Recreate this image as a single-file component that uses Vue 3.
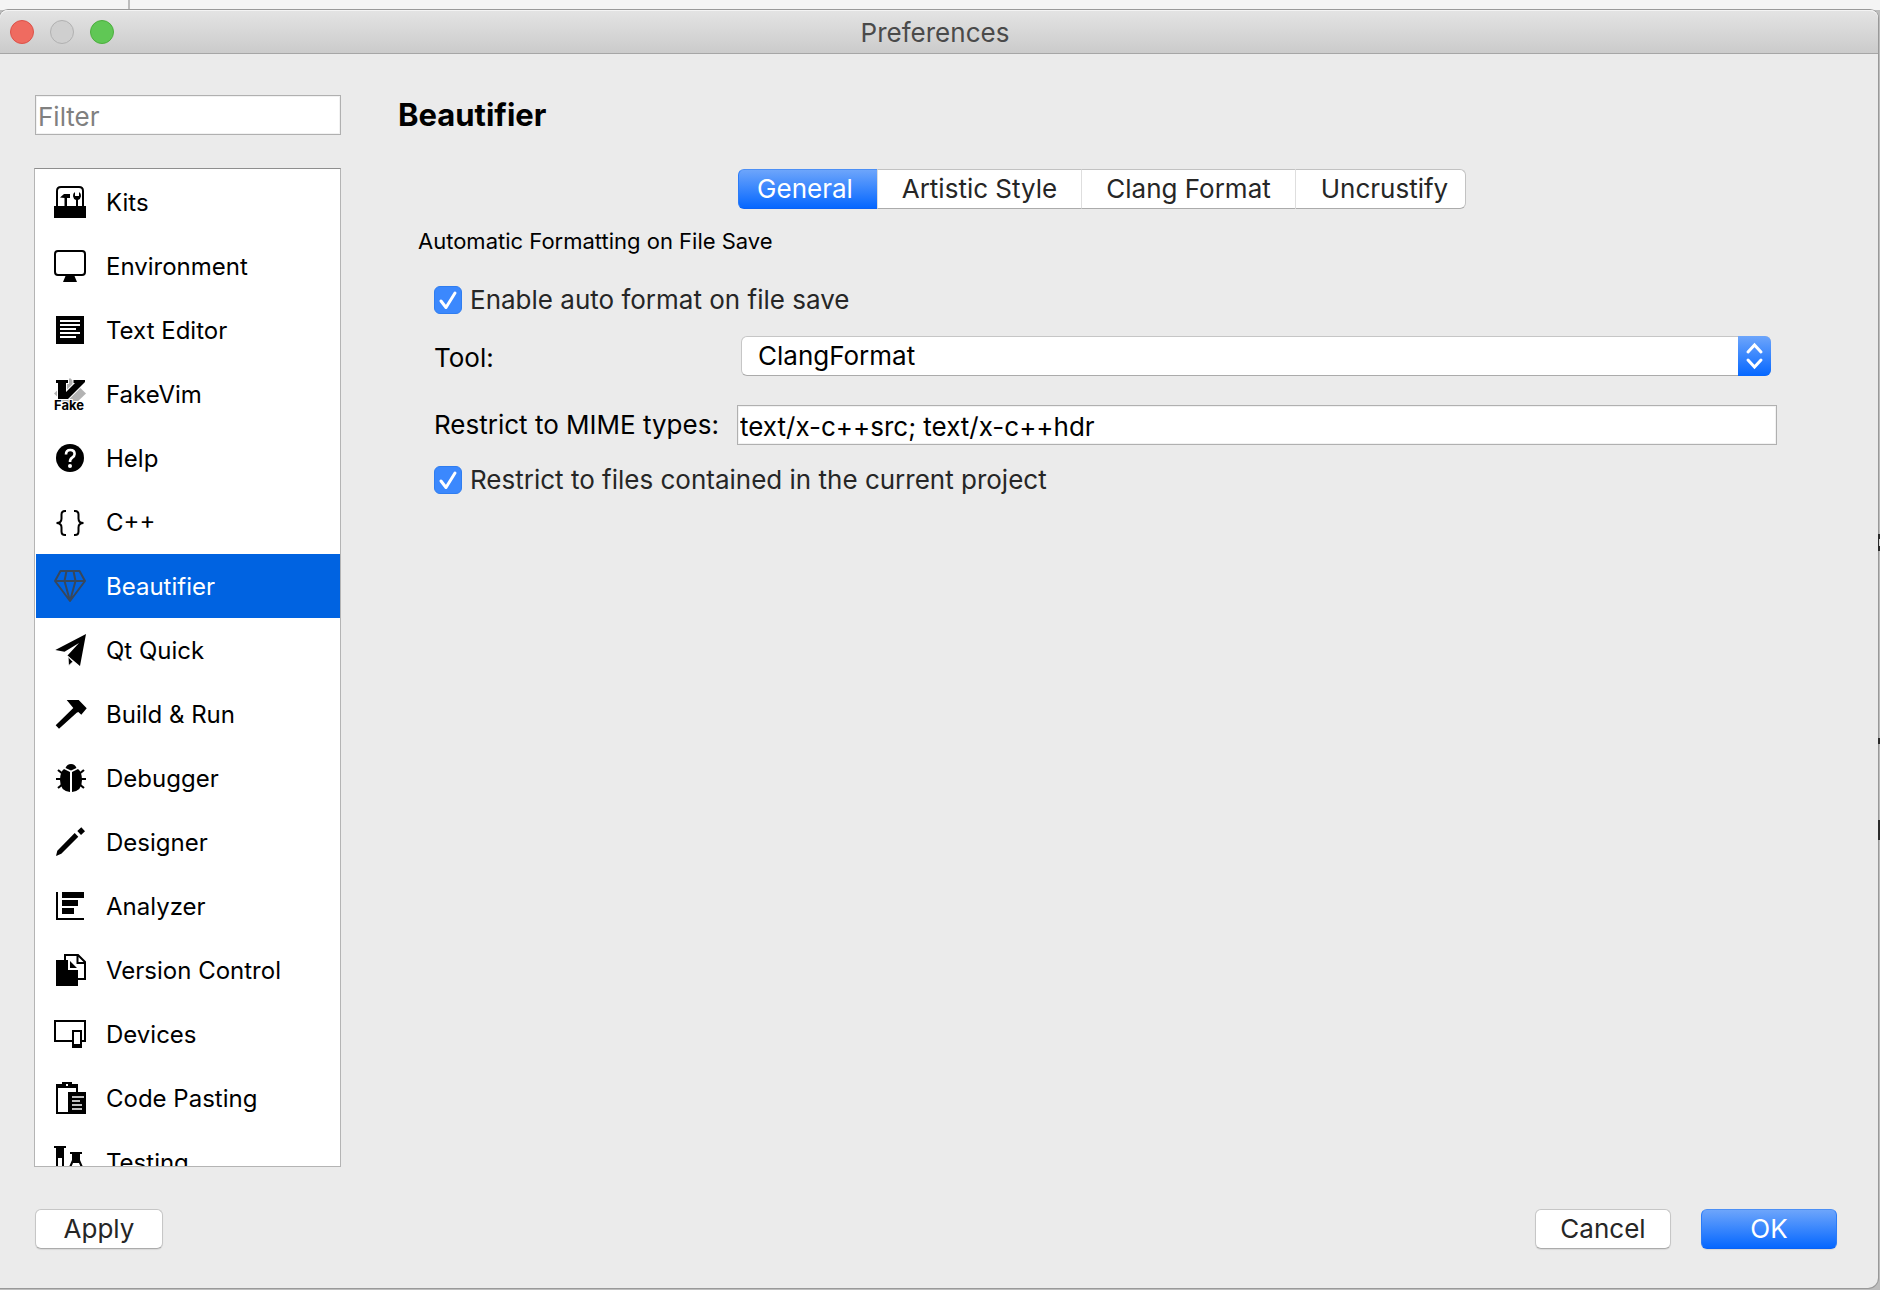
<script setup>
import { ref } from 'vue'

const categories = [
  { id: 'kits', label: 'Kits' },
  { id: 'environment', label: 'Environment' },
  { id: 'editor', label: 'Text Editor' },
  { id: 'fakevim', label: 'FakeVim' },
  { id: 'help', label: 'Help' },
  { id: 'cpp', label: 'C++' },
  { id: 'beautifier', label: 'Beautifier' },
  { id: 'quick', label: 'Qt Quick' },
  { id: 'build', label: 'Build & Run' },
  { id: 'debugger', label: 'Debugger' },
  { id: 'designer', label: 'Designer' },
  { id: 'analyzer', label: 'Analyzer' },
  { id: 'vcs', label: 'Version Control' },
  { id: 'devices', label: 'Devices' },
  { id: 'pasting', label: 'Code Pasting' },
  { id: 'testing', label: 'Testing' },
]
const tabs = ['General', 'Artistic Style', 'Clang Format', 'Uncrustify']

const current = ref('beautifier')
const currentTab = ref('General')
const filter = ref('')
const autoFormat = ref(true)
const tool = ref('ClangFormat')
const mimeTypes = ref('text/x-c++src; text/x-c++hdr')
const projectOnly = ref(true)
</script>

<template>
  <div class="desktop">
    <div class="behind-top"></div>
    <div class="behind-edge" aria-hidden="true">
      <i class="mark ring"></i>
      <i class="mark dot"></i>
      <i class="mark bar"></i>
    </div>

    <div class="window">
      <header class="titlebar">
        <div class="lights">
          <button class="light close" aria-label="Close"></button>
          <button class="light minimize" aria-label="Minimize" disabled></button>
          <button class="light zoom" aria-label="Zoom"></button>
        </div>
        <span class="title">Preferences</span>
      </header>

      <div class="body">
        <aside class="sidebar">
          <input v-model="filter" class="field filter" type="text" placeholder="Filter" aria-label="Filter" />
          <ul class="list">
            <li v-for="c in categories" :key="c.id">
              <button class="row" :class="{ selected: c.id === current }" @click="current = c.id">
                <svg class="icon" viewBox="0 0 32 32" aria-hidden="true">
                  <g v-if="c.id === 'kits'">
                    <path d="M3 20V5q0-4 4-4h18q4 0 4 4v15" fill="none" stroke="currentColor" stroke-width="2" />
                    <path d="M0 20h32v12H0zM6 11.500l4-3.500h6v4h-3v8h-2.500v-8z" />
                    <path d="M21 6v4h4V6a4.500 4.500 0 0 1-1 8v6h-2v-6a4.500 4.500 0 0 1-1-8z" />
                  </g>
                  <g v-else-if="c.id === 'environment'">
                    <rect x="1" y="1" width="30" height="24" rx="3" fill="none" stroke="currentColor" stroke-width="2" />
                    <path d="M11.500 26h9l2.500 6H9z" />
                  </g>
                  <g v-else-if="c.id === 'editor'">
                    <path d="M2 2h28v28H2z" />
                    <path d="M6 7h20M6 11h20M6 15h16M6 19h20M6 23h16" stroke="#fff" stroke-width="2" />
                  </g>
                  <g v-else-if="c.id === 'fakevim'">
                    <path d="M16 0l16 15.500L20 27H12L0 15.500z" fill="#b3b3b3" />
                    <path d="M2 2h12v3h-2v9l9-9h-1.500V2H31v2L14 21H4V5H2z" stroke="#fff" stroke-width="2" paint-order="stroke" />
                    <text class="fake" x="0" y="32" stroke="#fff" stroke-width="2" paint-order="stroke">Fake</text>
                  </g>
                  <g v-else-if="c.id === 'help'">
                    <circle cx="16" cy="16" r="14" />
                    <path d="M12 12.500q0-4.500 4.300-4.500t4.300 4q0 2-2.400 3.600T16 20" fill="none" stroke="#fff" stroke-width="2.600" />
                    <circle cx="16" cy="24" r="2" fill="#fff" />
                  </g>
                  <g v-else-if="c.id === 'cpp'" fill="none" stroke="currentColor" stroke-width="2">
                    <path d="M12 5h-1q-3.500 0-3.500 3.500v4Q7.500 17 2.500 17q5 0 5 4.500v4q0 3.500 3.500 3.500h1" />
                    <path d="M20 5h1q3.500 0 3.500 3.500v4q0 4.500 5 4.500-5 0-5 4.500v4q0 3.500-3.500 3.500h-1" />
                  </g>
                  <g v-else-if="c.id === 'beautifier'" fill="none" stroke="#37475b" stroke-width="2" stroke-linejoin="round">
                    <path d="M6.500 1h19L31 11 16 31 1 11zM1 11h30M12.500 1l-2 10L16 31l5.500-20-2-10" />
                  </g>
                  <g v-else-if="c.id === 'quick'">
                    <path d="M32 0L1.300 16l9.200 1.800L25 9 13.500 21.500 26 32z" />
                    <path d="M14 22.500l5 5.200-4.600 4.300z" stroke="#fff" stroke-width="1" />
                  </g>
                  <g v-else-if="c.id === 'build'">
                    <path d="M12.700 2h12l8 8.300-5.400 6.400-3-2.700-1.600.8L5 30.700 1.700 27.300 19.300 10z" />
                  </g>
                  <g v-else-if="c.id === 'debugger'">
                    <path d="M11.500 6q1.500-4 5.500-4t5.500 4L17 8.500zM16 10v20q-10-1-10-12 0-8 4-11zM18 10v20q10-1 10-12 0-8-4-11z" />
                    <path d="M2 17h6M26 17h6M4 8l5 4M30 8l-5 4M4 26l5-4M30 26l-5-4" stroke="currentColor" stroke-width="2.200" />
                  </g>
                  <g v-else-if="c.id === 'designer'">
                    <path d="M2 30l1.300-5.300L20.700 7l3.600 3.700-17 17zM27.300 1.300l3.700 4L27 9l-3.700-4z" />
                  </g>
                  <g v-else-if="c.id === 'analyzer'">
                    <path d="M2 2h2v26h26v2H2zM8 2h22v6H8zM8 10h16v6H8zM8 18h12v6H8z" />
                  </g>
                  <g v-else-if="c.id === 'vcs'">
                    <path d="M11 7V1h13l7 7v17h-7M23.500 1v8H31" fill="none" stroke="currentColor" stroke-width="2" />
                    <path d="M2 6h12v10h10v16H2zM16 7l7 7h-7z" />
                  </g>
                  <g v-else-if="c.id === 'devices'">
                    <path d="M18 24H0V2h32v22h-4v-2h2V4H2v18h16z" />
                    <path d="M18 12h10v18H18zM20 14v12h6V14z" fill-rule="evenodd" />
                  </g>
                  <g v-else-if="c.id === 'pasting'">
                    <path d="M2 2h6V0h10v2h6v8h-2V6H4v24h10v2H2zM12 2v2h2V2zM14 10h18v22H14z" fill-rule="evenodd" />
                    <path d="M18 15h12M18 19h8M18 23h10M18 27h10" stroke="#fff" stroke-width="1.600" />
                  </g>
                  <g v-else>
                    <path d="M0 0h12v2h-2v26q0 4-4 4t-4-4V2H0zM4 12v16q2 3 4 0V12z" fill-rule="evenodd" />
                    <path d="M16 6h12v2h-2v6l6 14v4H12v-4l6-14V8h-2zM19 17l-3 7h12l-3-7z" fill-rule="evenodd" />
                  </g>
                </svg>
                <span class="name">{{ c.label }}</span>
              </button>
            </li>
          </ul>
        </aside>

        <main class="pane">
          <h1>Beautifier</h1>
          <div class="tabs" role="tablist">
            <button
              v-for="t in tabs"
              :key="t"
              class="tab"
              role="tab"
              :aria-selected="t === currentTab"
              :class="{ active: t === currentTab }"
              @click="currentTab = t"
            >{{ t }}</button>
          </div>
          <h2>Automatic Formatting on File Save</h2>
          <div class="form">
            <label class="check">
              <input v-model="autoFormat" type="checkbox" />
              <svg class="tick" viewBox="0 0 28 28" aria-hidden="true"><path d="M7 15l5 6.500L21 7" /></svg>
              <span>Enable auto format on file save</span>
            </label>
            <div class="line tool-line">
              <label for="tool">Tool:</label>
              <div class="select">
                <select id="tool" v-model="tool">
                  <option>ClangFormat</option>
                  <option>ArtisticStyle</option>
                  <option>Uncrustify</option>
                </select>
                <svg class="stepper" viewBox="0 0 33 40" aria-hidden="true"><path d="M10 16l6.500-7 6.500 7M10 24l6.500 7 6.500-7" /></svg>
              </div>
            </div>
            <div class="line mime-line">
              <label for="mime">Restrict to MIME types:</label>
              <input id="mime" v-model="mimeTypes" class="field" type="text" />
            </div>
            <label class="check">
              <input v-model="projectOnly" type="checkbox" />
              <svg class="tick" viewBox="0 0 28 28" aria-hidden="true"><path d="M7 15l5 6.500L21 7" /></svg>
              <span>Restrict to files contained in the current project</span>
            </label>
          </div>
        </main>
      </div>

      <footer class="footer">
        <button class="btn apply">Apply</button>
        <button class="btn">Cancel</button>
        <button class="btn primary">OK</button>
      </footer>
    </div>
  </div>
</template>

<style>
html,
body {
  margin: 0;
  background: #c4c4c4;
}
</style>

<style scoped>
* {
  box-sizing: border-box;
}
.desktop {
  position: relative;
  display: flex;
  flex-direction: column;
  height: 100vh;
  overflow: hidden;
  background: #bdbdbd;
  font-family: Inter, "Liberation Sans", sans-serif;
  font-size: 26px;
  line-height: 32px;
  color: #000;
}
button,
input,
select {
  font: inherit;
  color: inherit;
  margin: 0;
}
.behind-top {
  flex: none;
  height: 10px;
  background: linear-gradient(90deg, transparent 128px, #bcbcbc 128px 130px, transparent 130px), #f4f4f4;
}
.behind-edge {
  position: absolute;
  top: 9px;
  right: 0;
  bottom: 0;
  width: 2px;
}
.mark {
  position: absolute;
  left: 0;
  width: 2px;
  background: #2b2b2b;
}
.ring {
  top: 525px;
  height: 17px;
  border: solid #2b2b2b;
  border-width: 5px 0 5px 1px;
  background: #d8d8d8;
}
.dot {
  top: 729px;
  height: 6px;
}
.bar {
  top: 811px;
  height: 20px;
}
.window {
  flex: 1;
  min-height: 0;
  margin: 0 2px 2px 0;
  display: flex;
  flex-direction: column;
  background: #ebebeb;
  border-radius: 8px 8px 10px 0;
  box-shadow: 0 0 0 1px #999;
}
.titlebar {
  flex: none;
  display: grid;
  grid-template-columns: 1fr auto 1fr;
  align-items: center;
  height: 44px;
  padding: 0 18px 0 10px;
  background: linear-gradient(#e4e4e4, #cbcbcb);
  border-bottom: 1px solid #a6a6a6;
  border-radius: 8px 8px 0 0;
  box-shadow: inset 0 1px #f4f4f4;
}
.lights {
  display: flex;
  gap: 16px;
}
.light {
  width: 24px;
  height: 24px;
  padding: 0;
  border-radius: 50%;
  border: 1px solid;
}
.close {
  background: #ef6b60;
  border-color: #dc5249;
}
.minimize {
  background: #cfcfcf;
  border-color: #b1b1b1;
}
.zoom {
  background: #60c755;
  border-color: #4caf3e;
}
.title {
  padding-top: 2px;
  color: #4a4a4a;
}
.body {
  flex: 1;
  min-height: 0;
  display: flex;
  gap: 57px;
  padding: 41px 72px 0 34px;
}
.sidebar {
  flex: none;
  width: 307px;
  display: flex;
  flex-direction: column;
  gap: 33px;
}
.field {
  height: 40px;
  padding: 2px 2px 0;
  background: #fff;
  border: 1px solid #b0b0b0;
  border-radius: 0;
  box-shadow: inset 0 0 0 1px #f2f2f2;
  outline: none;
}
.filter {
  flex: none;
  margin-left: 1px;
}
.filter::placeholder {
  color: #808080;
  opacity: 1;
}
.list {
  flex: 1;
  min-height: 0;
  margin: 0;
  padding: 1px 0 0 1px;
  list-style: none;
  overflow-y: auto;
  scrollbar-width: none;
  background: #fff;
  border: 1px solid #b4b4b4;
  border-top-color: #8e8e8e;
}
.row {
  display: flex;
  align-items: center;
  gap: 20px;
  width: 100%;
  height: 64px;
  padding: 0 18px;
  border: 0;
  background: none;
  font-size: 24px;
  text-align: left;
}
.selected {
  background: #0063e1;
  color: #fff;
}
.name {
  padding-top: 2px;
}
.icon {
  flex: none;
  width: 32px;
  height: 32px;
  fill: currentColor;
  overflow: visible;
}
.fake {
  font-size: 13px;
  font-weight: 700;
}
.pane {
  flex: 1;
  min-width: 0;
}
h1 {
  margin: 2px 0 36px;
  font-size: 31px;
  line-height: 36px;
  font-weight: 700;
}
.tabs {
  display: grid;
  grid-template-columns: 139px 204px 214px 171px;
  justify-content: center;
}
.tab {
  height: 40px;
  padding: 0;
  border: solid #c2c2c2;
  border-width: 1px 0 1px 1px;
  border-left-color: #dedede;
  border-bottom-color: #ababab;
  background: #fff;
  color: #262626;
  white-space: nowrap;
}
.tab:first-child {
  padding-right: 6px;
  border-radius: 6px 0 0 6px;
}
.tab:last-child {
  padding-left: 8px;
  border-right-width: 1px;
  border-radius: 0 6px 6px 0;
}
.tab.active {
  border-color: #4c8ff5 #2a7bf8 #0a62f5;
  background: linear-gradient(#6da5fb, #0567ff);
  color: #fff;
}
h2 {
  margin: 18px 0 0 20px;
  font-size: 22px;
  line-height: 28px;
  font-weight: 400;
}
.form {
  padding: 29px 0 0 36px;
}
.check {
  position: relative;
  display: flex;
  align-items: center;
  gap: 8px;
  height: 32px;
  color: #262626;
}
.check input {
  appearance: none;
  width: 28px;
  height: 28px;
  border: 1px solid #b4b4b4;
  border-radius: 6px;
  background: #fff;
}
.check input:checked {
  border-color: #2f7df0;
  background: #3b88fd;
}
.tick {
  position: absolute;
  left: 0;
  top: 2px;
  width: 28px;
  height: 28px;
  fill: none;
  stroke: #fff;
  stroke-width: 3;
  stroke-linecap: round;
  stroke-linejoin: round;
  pointer-events: none;
}
.line {
  display: grid;
  grid-template-columns: 303px 1fr;
  align-items: center;
}
.tool-line {
  margin: 20px 35px 29px 0;
}
.tool-line label {
  padding-top: 4px;
}
.mime-line {
  margin: 0 29px 19px 0;
}
.select {
  position: relative;
  display: flex;
  margin-left: 4px;
}
select {
  appearance: none;
  flex: 1;
  height: 40px;
  padding: 0 40px 0 16px;
  border: 1px solid #c6c6c6;
  border-bottom-color: #ababab;
  border-radius: 6px;
  background: #fff;
}
.stepper {
  position: absolute;
  right: 0;
  top: 0;
  width: 33px;
  height: 40px;
  border-radius: 0 6px 6px 0;
  background: linear-gradient(#6da5fb, #0567ff);
  fill: none;
  stroke: #fff;
  stroke-width: 3;
  stroke-linecap: round;
  pointer-events: none;
}
.footer {
  flex: none;
  display: flex;
  gap: 30px;
  padding: 42px 41px 39px 35px;
}
.btn {
  width: 136px;
  height: 40px;
  padding: 0;
  border: 1px solid #c6c6c6;
  border-bottom-color: #ababab;
  border-radius: 6px;
  background: #fff;
  box-shadow: 0 1px 1px rgba(0, 0, 0, 0.08);
  color: #262626;
}
.apply {
  width: 128px;
  margin-right: auto;
}
.primary {
  border-color: #4c8ff5 #2a7bf8 #0a62f5;
  background: linear-gradient(#6da5fb, #0567ff);
  color: #fff;
}
</style>
